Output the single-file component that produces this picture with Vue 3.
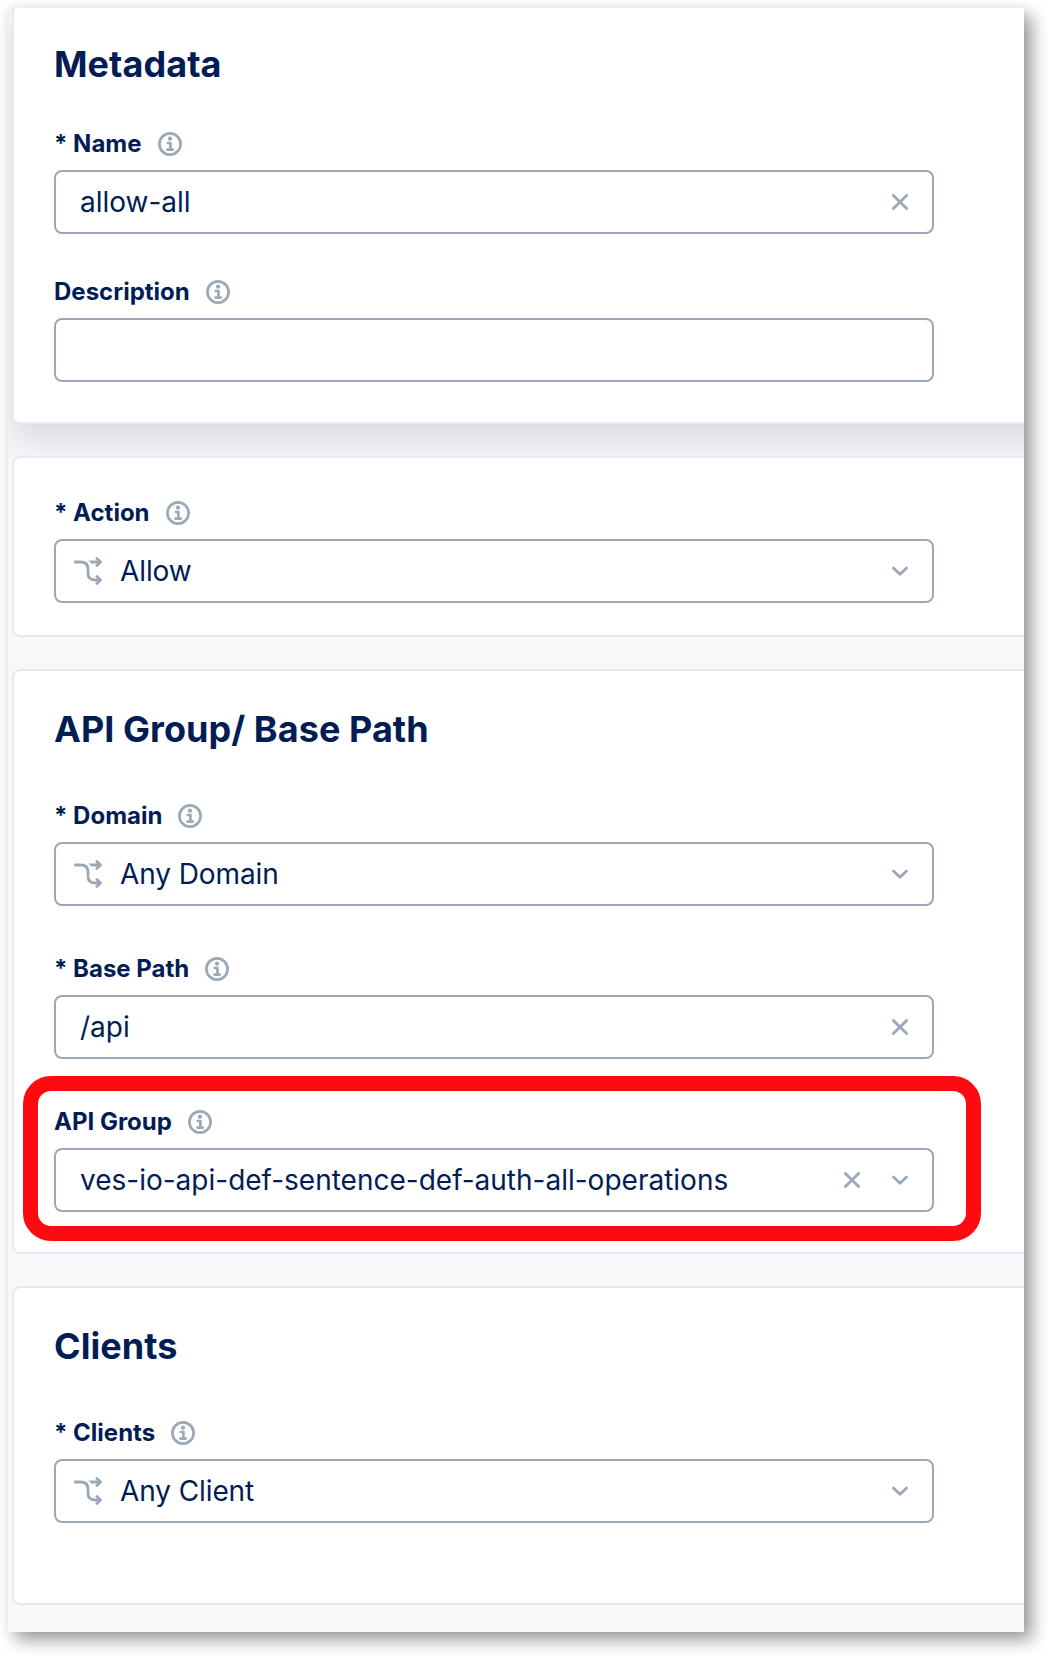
<script setup>
const cards = [
  {
    id: 'metadata',
    title: 'Metadata',
    fields: [
      { label: 'Name', required: true, value: 'allow-all', clear: true },
      { label: 'Description', value: '' },
    ],
  },
  {
    id: 'action',
    fields: [{ label: 'Action', required: true, value: 'Allow', choice: true, menu: true }],
  },
  {
    id: 'group',
    title: 'API Group/ Base Path',
    fields: [
      { label: 'Domain', required: true, value: 'Any Domain', choice: true, menu: true },
      { label: 'Base Path', required: true, value: '/api', clear: true },
      {
        label: 'API Group',
        value: 'ves-io-api-def-sentence-def-auth-all-operations',
        clear: true,
        menu: true,
        highlight: true,
      },
    ],
  },
  {
    id: 'clients',
    title: 'Clients',
    fields: [{ label: 'Clients', required: true, value: 'Any Client', choice: true, menu: true }],
  },
]
</script>

<template>
  <div class="page">
    <main class="sheet">
      <section v-for="card in cards" :key="card.id" class="card" :class="card.id">
        <h2 v-if="card.title">{{ card.title }}</h2>
        <div class="fields">
          <div v-for="field in card.fields" :key="field.label" class="field">
            <div class="label">
              <span><span v-if="field.required" class="star">* </span>{{ field.label }}</span>
              <svg class="info" viewBox="0 0 24 24">
                <circle cx="12" cy="12" r="10.6" fill="none" stroke="currentColor" stroke-width="2.7" />
                <circle cx="12" cy="6.7" r="2.1" fill="currentColor" />
                <path d="M9.8 11H12.4V17.3M9.5 17.6H14.7" fill="none" stroke="currentColor" stroke-width="2.7" stroke-linecap="round" stroke-linejoin="round" />
              </svg>
            </div>
            <div class="control" :class="{ choice: field.choice }">
              <svg v-if="field.choice" class="branch" viewBox="0 0 28 28" fill="none" stroke="currentColor" stroke-width="2.8" stroke-linecap="round" stroke-linejoin="round">
                <path d="M1.2 5H6.5C11.5 5 14 7 14 12V16C14 20.5 16.5 23 21 23H25" />
                <path d="M14.2 3.6H25V6.4H17.2C16.2 5.4 15.2 4.5 14.2 3.6Z" fill="currentColor" stroke="none" />
                <path d="M22.9 1.5 26.4 5 22.9 8.5M22.9 19.5 26.4 23 22.9 26.5" />
              </svg>
              <span class="value">{{ field.value }}</span>
              <svg v-if="field.clear" class="glyph" viewBox="0 0 16 16">
                <path d="M1.4 1.4 14.6 14.6M14.6 1.4 1.4 14.6" />
              </svg>
              <svg v-if="field.menu" class="glyph" viewBox="0 0 16 16">
                <path d="M1.5 4.9 8 11.2 14.5 4.9" />
              </svg>
            </div>
            <div v-if="field.highlight" class="highlight"></div>
          </div>
        </div>
      </section>
    </main>
  </div>
</template>

<style>
body {
  margin: 0;
  background: #fff;
}
</style>

<style scoped>
.page {
  box-sizing: border-box;
  width: 1048px;
  height: 1656px;
  padding: 8px 24px 24px 8px;
  overflow: hidden;
  font-family: Inter, 'Liberation Sans', sans-serif;
  color: #021d55;
}
.sheet {
  display: flex;
  flex-direction: column;
  gap: 32px;
  height: 1624px;
  overflow: hidden;
  background: #f6f8fa;
  box-shadow: 8px 8px 16px rgba(0, 0, 0, 0.39), 0 0 10px rgba(0, 0, 0, 0.06);
}
.card {
  flex: none;
  margin-left: 4px;
  margin-right: -60px;
  padding: 36px 0 40px 40px;
  border: 2px solid #e6e8f3;
  border-radius: 8px;
  background: #fff;
}
.metadata {
  margin-top: -4px;
  box-shadow: 0 16px 36px rgba(10, 10, 30, 0.13);
}
.action {
  padding-top: 42px;
  padding-bottom: 32px;
}
.clients {
  padding-bottom: 80px;
}
h2 {
  margin: 0 0 52px;
  font-size: 36px;
  line-height: 44px;
  font-weight: 700;
  letter-spacing: 0.05px;
}
.metadata h2 {
  margin-bottom: 45px;
}
.fields {
  display: flex;
  flex-direction: column;
  gap: 50px;
  width: 880px;
}
.metadata .fields {
  gap: 45px;
}
.field {
  position: relative;
}
.label {
  display: flex;
  align-items: center;
  gap: 16px;
  box-sizing: border-box;
  height: 25px;
  padding-top: 1px;
  margin-bottom: 14px;
  font-size: 24px;
  line-height: 24px;
  font-weight: 700;
  white-space: pre;
}
.info {
  width: 24px;
  height: 24px;
  color: #9ba8b7;
}
.control {
  display: flex;
  align-items: center;
  gap: 32px;
  box-sizing: border-box;
  height: 64px;
  padding: 0 24px;
  border: 2px solid #9ba8b7;
  border-radius: 8px;
}
.choice {
  gap: 18px;
  padding-left: 18px;
}
.branch {
  width: 28px;
  height: 28px;
  color: #9ba8b7;
}
.value {
  flex: 1;
  font-size: 28px;
  line-height: 36px;
  white-space: nowrap;
}
.choice .value {
  letter-spacing: -0.1px;
}
.glyph {
  width: 16px;
  height: 16px;
  fill: none;
  stroke: #9ba8b7;
  stroke-width: 2.8;
  stroke-linecap: round;
  stroke-linejoin: round;
}
.highlight {
  position: absolute;
  top: -33px;
  left: -31.5px;
  box-sizing: border-box;
  width: 958.5px;
  height: 165px;
  border: 15px solid #ff0a10;
  border-radius: 28px;
}
</style>
